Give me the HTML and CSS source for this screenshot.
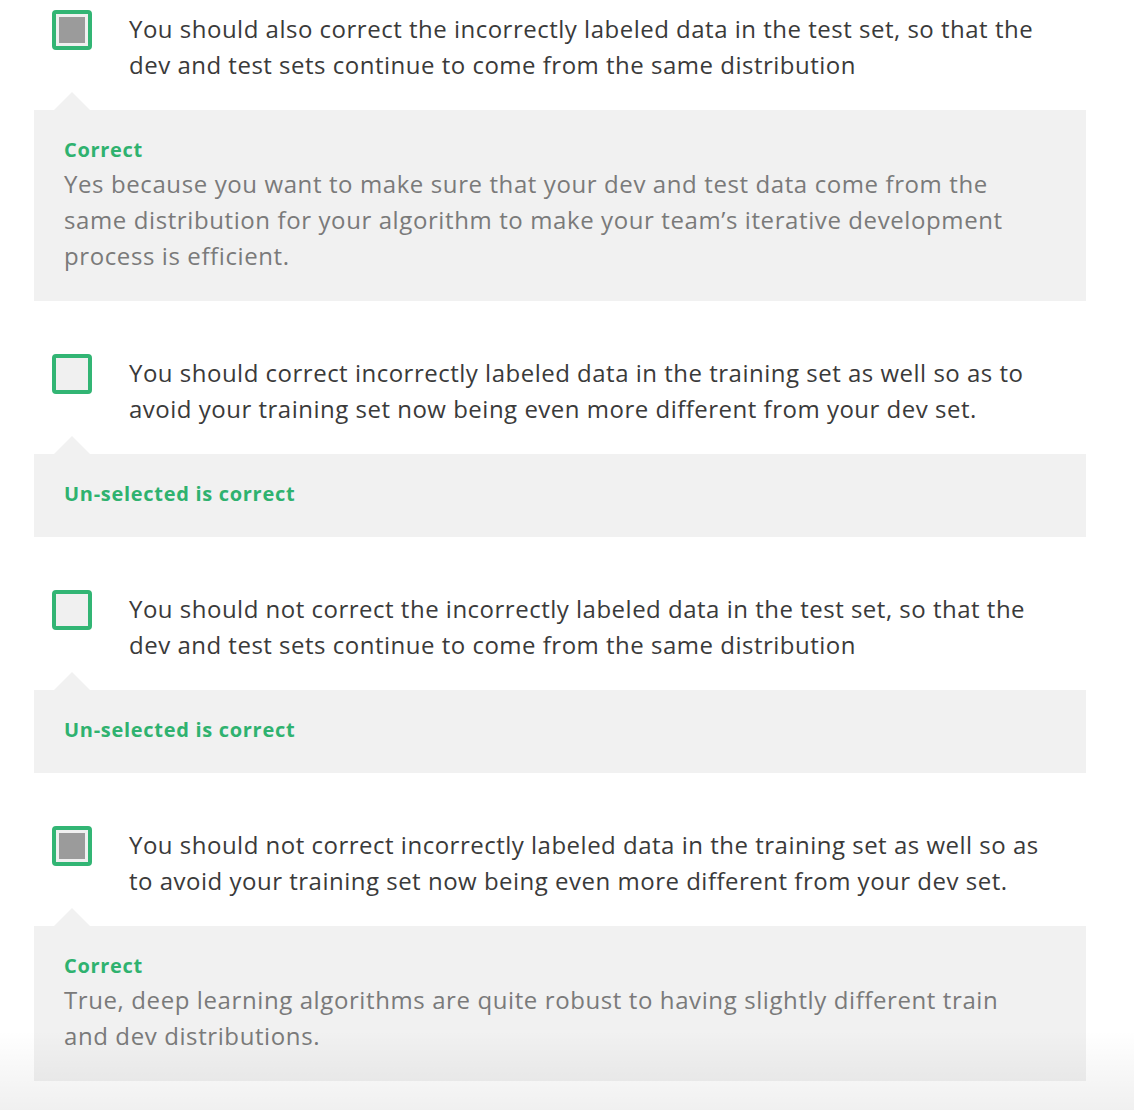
FILE: index.html
```html
<!DOCTYPE html>
<html>
<head>
<meta charset="utf-8">
<link rel="stylesheet" href="styles.css">
</head>
<body>
<div class="quiz">
  <div class="option">
    <div class="question">
      <span class="check checked"><span class="mark"></span></span>
      <div class="qtext">You should also correct the incorrectly labeled data in the test set, so that the dev and test sets continue to come from the same distribution</div>
    </div>
    <div class="feedback">
      <div class="label">Correct</div>
      <div class="explain">Yes because you want to make sure that your dev and test data come from the same distribution for your algorithm to make your team’s iterative development process is efficient.</div>
    </div>
  </div>
  <div class="option">
    <div class="question">
      <span class="check"></span>
      <div class="qtext">You should correct incorrectly labeled data in the training set as well so as to avoid your training set now being even more different from your dev set.</div>
    </div>
    <div class="feedback">
      <div class="label">Un-selected is correct</div>
    </div>
  </div>
  <div class="option">
    <div class="question">
      <span class="check"></span>
      <div class="qtext">You should not correct the incorrectly labeled data in the test set, so that the dev and test sets continue to come from the same distribution</div>
    </div>
    <div class="feedback">
      <div class="label">Un-selected is correct</div>
    </div>
  </div>
  <div class="option">
    <div class="question">
      <span class="check checked"><span class="mark"></span></span>
      <div class="qtext">You should not correct incorrectly labeled data in the training set as well so as to avoid your training set now being even more different from your dev set.</div>
    </div>
    <div class="feedback">
      <div class="label">Correct</div>
      <div class="explain">True, deep learning algorithms are quite robust to having slightly different train and dev distributions.</div>
    </div>
  </div>
</div>
<div class="fade"></div>
</body>
</html>
```
FILE: styles.css
```css
html, body {
  margin: 0;
  padding: 0;
  background: #fff;
}
body {
  font-family: "Open Sans", "Liberation Sans", sans-serif;
  height: 1110px;
  overflow: hidden;
  position: relative;
}
.quiz {
  width: 1052px;
  margin-left: 34px;
  padding-top: 10px;
}
.option {
  margin-bottom: 53px;
}
.question {
  display: flex;
  align-items: flex-start;
  padding-left: 18px;
  gap: 37px;
}
.check {
  flex: none;
  width: 40px;
  height: 40px;
  box-sizing: border-box;
  border: 4px solid #32b574;
  border-radius: 4px;
  background: #f0f0f0;
  display: flex;
  align-items: center;
  justify-content: center;
}
.mark {
  width: 26px;
  height: 26px;
  background: #9b9b9b;
}
.qtext {
  width: 925px;
  font-size: 24px;
  line-height: 36px;
  letter-spacing: 0.5px;
  color: #3a3a3a;
  margin-top: 1px;
}
.feedback {
  position: relative;
  margin-top: 27px;
  background: #f1f1f1;
  padding: 24px 66px 27px 30px;
}
.feedback::before {
  content: "";
  position: absolute;
  left: 20px;
  top: -18px;
  width: 0;
  height: 0;
  border-left: 18px solid transparent;
  border-right: 18px solid transparent;
  border-bottom: 18px solid #f1f1f1;
}
.label {
  font-size: 20px;
  font-weight: 700;
  line-height: 32px;
  letter-spacing: 0.7px;
  color: #2fb26f;
}
.explain {
  font-size: 24px;
  line-height: 36px;
  letter-spacing: 0.6px;
  color: #7a7a7a;
}
.fade {
  position: absolute;
  left: 0;
  right: 0;
  bottom: 0;
  height: 80px;
  background: linear-gradient(to bottom, rgba(0,0,0,0), rgba(0,0,0,0.06));
  pointer-events: none;
}
```
